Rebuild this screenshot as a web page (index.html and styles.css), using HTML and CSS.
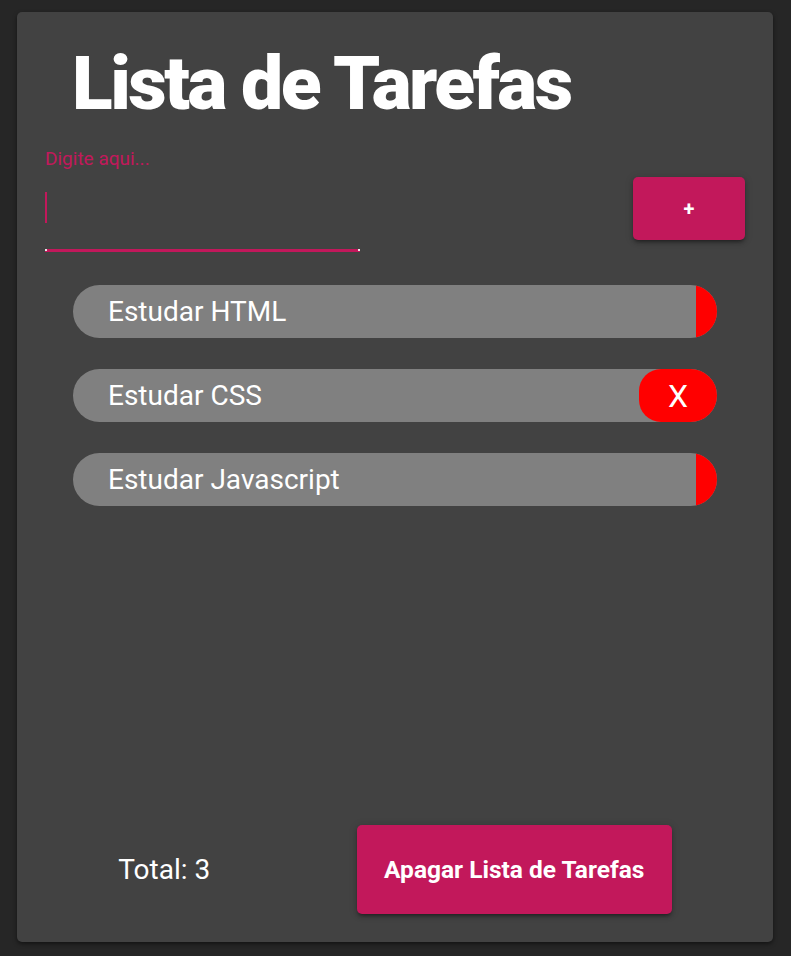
FILE: index.html
```html
<!DOCTYPE html>
<html lang="pt">
<head>
<meta charset="utf-8">
<title>Lista de Tarefas</title>
<link rel="stylesheet" href="styles.css">
</head>
<body>
<main class="card">
  <h1 class="title">Lista de Tarefas</h1>
  <div class="form-row">
    <div class="field">
      <label class="field-label">Digite aqui...</label>
      <div class="field-input"><span class="caret"></span></div>
      <div class="field-line"></div>
    </div>
    <button class="add-btn">+</button>
  </div>
  <ul class="list">
    <li class="item"><span class="item-text">Estudar HTML</span><button class="del-btn"></button></li>
    <li class="item"><span class="item-text">Estudar CSS</span><button class="del-btn open">X</button></li>
    <li class="item"><span class="item-text">Estudar Javascript</span><button class="del-btn"></button></li>
  </ul>
  <footer class="footer">
    <span class="total">Total: 3</span>
    <button class="clear-btn">Apagar Lista de Tarefas</button>
  </footer>
</main>
</body>
</html>
```

FILE: styles.css
```css
* { box-sizing: border-box; }
html, body { height: 100%; }
body {
  margin: 0;
  background: #262626;
  font-family: Roboto, "Liberation Sans", sans-serif;
  padding: 12px 18px 14px 17px;
}
.card {
  background: #424242;
  border-radius: 5px;
  box-shadow: 0 2px 4px rgba(0,0,0,0.5);
  height: 930px;
  padding: 0 28px;
  display: flex;
  flex-direction: column;
}
.title {
  margin: 27px 0 0 27px;
  font-size: 75px;
  font-weight: 900;
  color: #fff;
  line-height: 88px;
  letter-spacing: -2.5px;
}
.form-row {
  display: flex;
  justify-content: space-between;
  align-items: flex-start;
  margin-top: 21px;
}
.field { width: 315px; }
.field-label {
  display: block;
  color: #c2185b;
  font-size: 19px;
  line-height: 21px;
}
.field-input {
  height: 80px;
  padding-top: 23px;
}
.caret {
  display: block;
  width: 1.5px;
  height: 31px;
  background: #c2185b;
}
.field-line {
  height: 3px;
  background: #c2185b;
  position: relative;
}
.field-line::before, .field-line::after {
  content: "";
  position: absolute;
  top: 0;
  width: 2px;
  height: 2px;
  background: #e8e8e8;
}
.field-line::before { left: 0; }
.field-line::after { right: 0; }
.add-btn {
  margin-top: 29px;
  width: 112px;
  height: 63px;
  border: 0;
  border-radius: 5px;
  background: #c2185b;
  color: #fff;
  font-family: Roboto, sans-serif;
  font-weight: 700;
  font-size: 20px;
  box-shadow: 0 3px 3px -2px rgba(0,0,0,0.3), 0 3px 4px 0 rgba(0,0,0,0.2), 0 1px 8px 0 rgba(0,0,0,0.15);
}
.list {
  list-style: none;
  margin: 33px 28px 0;
  padding: 0;
  display: flex;
  flex-direction: column;
  gap: 31px;
}
.item {
  height: 53px;
  border-radius: 27px;
  background: #808080;
  display: flex;
  align-items: center;
  justify-content: space-between;
  overflow: hidden;
}
.item-text {
  color: #fff;
  font-size: 28px;
  padding-left: 35px;
}
.del-btn {
  align-self: stretch;
  width: 21px;
  border: 0;
  background: #ff0000;
  color: #fff;
  font-family: Roboto, sans-serif;
  font-size: 32px;
  padding: 0;
}
.del-btn.open {
  width: 78px;
  border-radius: 22px;
}
.footer {
  margin-top: auto;
  margin-bottom: 28px;
  display: flex;
  justify-content: space-around;
  align-items: center;
}
.total {
  color: #fff;
  font-size: 28px;
}
.clear-btn {
  width: 315px;
  height: 89px;
  border: 0;
  border-radius: 5px;
  background: #c2185b;
  color: #fff;
  font-family: Roboto, sans-serif;
  font-weight: 700;
  font-size: 24.5px;
  box-shadow: 0 3px 3px -2px rgba(0,0,0,0.3), 0 3px 4px 0 rgba(0,0,0,0.2), 0 1px 8px 0 rgba(0,0,0,0.15);
}
```
